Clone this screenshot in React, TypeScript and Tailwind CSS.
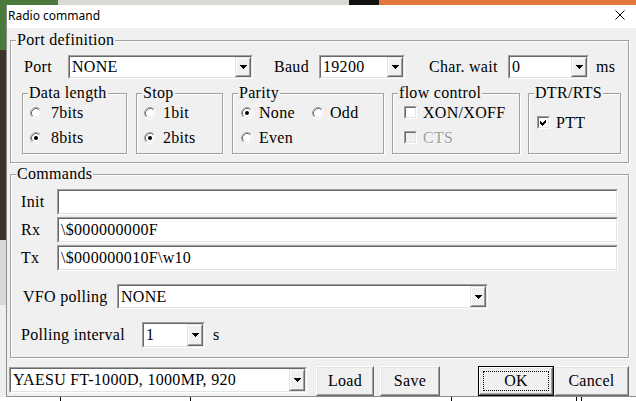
import React from "react";

type Kids = { children?: React.ReactNode };

function Sunken({ cls, bg = "bg-white", children }: { cls: string; bg?: string } & Kids) {
  return (
    <div className={`border border-t-[#a0a0a0] border-l-[#a0a0a0] border-b-white border-r-white ${cls}`}>
      <div className={`h-full w-full border border-t-[#696969] border-l-[#696969] border-b-[#e3e3e3] border-r-[#e3e3e3] ${bg} flex items-center`}>
        {children}
      </div>
    </div>
  );
}

function Arrow() {
  return (
    <svg width="7" height="4" viewBox="0 0 7 4" shapeRendering="crispEdges">
      <rect x="0" y="0" width="7" height="1" fill="#000" />
      <rect x="1" y="1" width="5" height="1" fill="#000" />
      <rect x="2" y="2" width="3" height="1" fill="#000" />
      <rect x="3" y="3" width="1" height="1" fill="#000" />
    </svg>
  );
}

function DropBtn() {
  return (
    <div className="h-full w-[16px] border border-t-[#e3e3e3] border-l-[#e3e3e3] border-b-[#696969] border-r-[#696969]">
      <div className="h-full w-full border border-t-white border-l-white border-b-[#a0a0a0] border-r-[#a0a0a0] bg-[#f0f0f0] flex items-center justify-center">
        <Arrow />
      </div>
    </div>
  );
}

function Combo({ cls, value }: { cls: string; value: string }) {
  return (
    <Sunken cls={cls}>
      <span className="flex-1 pl-[2px] whitespace-nowrap overflow-hidden">{value}</span>
      <DropBtn />
    </Sunken>
  );
}

function Group({ title, cls, children }: { title: string; cls: string } & Kids) {
  return (
    <div className={`relative border border-[#a0a0a0] shadow-[inset_1px_1px_0_#fff,1px_1px_0_#fff] ${cls}`}>
      <span className="absolute left-[5px] top-[-10px] px-[1px] bg-[#f0f0f0] leading-[18px] whitespace-nowrap">{title}</span>
      {children}
    </div>
  );
}

function RadioDot({ checked }: { checked?: boolean }) {
  return (
    <svg width="12" height="12" viewBox="0 0 12 12" className="shrink-0">
      <circle cx="6" cy="6" r="5" fill="#fff" />
      <path d="M2.11 9.89 A5.5 5.5 0 0 1 9.89 2.11" stroke="#a0a0a0" strokeWidth="1" fill="none" />
      <path d="M9.89 2.11 A5.5 5.5 0 0 1 2.11 9.89" stroke="#ffffff" strokeWidth="1" fill="none" />
      <path d="M2.82 9.18 A4.5 4.5 0 0 1 9.18 2.82" stroke="#696969" strokeWidth="1" fill="none" />
      <path d="M9.18 2.82 A4.5 4.5 0 0 1 2.82 9.18" stroke="#e3e3e3" strokeWidth="1" fill="none" />
      {checked && <circle cx="6" cy="6" r="2" fill="#000" />}
    </svg>
  );
}

function Radio({ label, checked, gap }: { label: string; checked?: boolean; gap: string }) {
  return (
    <div className="flex items-center h-[25px]">
      <RadioDot checked={checked} />
      <span className={gap}>{label}</span>
    </div>
  );
}

function Check({ label, checked, disabled }: { label: string; checked?: boolean; disabled?: boolean }) {
  return (
    <div className="flex items-center h-[25px]">
      <div className="w-[13px] h-[13px] shrink-0 border border-t-[#a0a0a0] border-l-[#a0a0a0] border-b-white border-r-white">
        <div className={`w-full h-full border border-t-[#696969] border-l-[#696969] border-b-[#e3e3e3] border-r-[#e3e3e3] ${disabled ? "bg-[#f0f0f0]" : "bg-white"}`}>
          {checked && (
            <svg width="9" height="9" viewBox="0 0 9 9" shapeRendering="crispEdges">
              <path d="M1 3h1v1h1v1h1v-1h1v-1h1v-1h1v3h-1v1h-1v1h-1v1h-1v-1h-1v-1h-1z" fill="#000" />
            </svg>
          )}
        </div>
      </div>
      <span className={`ml-[6px] ${disabled ? "text-[#a0a0a0] [text-shadow:1px_1px_0_#fff]" : ""}`}>{label}</span>
    </div>
  );
}

function Btn({ cls, label, def }: { cls: string; label: string; def?: boolean }) {
  const inner = (
    <div className="w-full h-full border border-t-white border-l-white border-b-[#696969] border-r-[#696969]">
      <div className="w-full h-full border border-t-[#e3e3e3] border-l-[#e3e3e3] border-b-[#a0a0a0] border-r-[#a0a0a0] bg-[#f0f0f0] flex items-center justify-center">
        {def ? (
          <div className="w-[calc(100%-4px)] h-[calc(100%-4px)] border border-dotted border-black flex items-center justify-center">
            {label}
          </div>
        ) : (
          label
        )}
      </div>
    </div>
  );
  return def ? <div className={`border border-black ${cls}`}>{inner}</div> : <div className={cls}>{inner}</div>;
}

function TopStrip() {
  return (
    <div className="flex h-[5px] shrink-0">
      <div className="w-[58px] bg-[#4b7a3c]" />
      <div className="w-[291px] bg-[#d9d9d6]" />
      <div className="w-[30px] bg-[#111111]" />
      <div className="flex-1 bg-[#e0773a]" />
    </div>
  );
}

function LeftStrip() {
  return (
    <div className="w-[6px] shrink-0 flex flex-col">
      <div className="h-[45px] bg-[#4a7a3a]" />
      <div className="h-[190px] bg-[#3a3328]" />
      <div className="h-[65px] bg-[#d8d8d8]" />
      <div className="flex-1 bg-[#efefef]" />
    </div>
  );
}

function BottomStrip() {
  return (
    <div className="flex h-[4px] shrink-0 bg-white">
      <div className="w-[60px]" />
      <div className="w-px bg-black" />
      <div className="w-[129px]" />
      <div className="w-px bg-black" />
      <div className="w-[260px]" />
      <div className="w-px bg-black" />
      <div className="w-[124px]" />
      <div className="w-px bg-black" />
      <div className="w-[4px]" />
      <div className="w-px bg-black" />
    </div>
  );
}

function Dialog() {
  return (
    <div className="flex-1 flex flex-col border-l border-b border-[#8c8c8c] font-['Liberation_Serif',serif] text-[16px] leading-[18px] tracking-[0.3px] text-black">
      <div className="h-[23px] shrink-0 bg-white flex items-center justify-between pl-[1px] pr-[11px] tracking-normal">
        <span className="font-['Noto_Sans',sans-serif] text-[12px] leading-[16px] -mt-[2px]">Radio command</span>
        <svg width="10" height="10" viewBox="0 0 10 10" className="-mt-[3px]">
          <path d="M0.5 0.5 L9.5 9.5 M9.5 0.5 L0.5 9.5" stroke="#000" strokeWidth="1" />
        </svg>
      </div>
      <div className="flex-1 bg-[#f0f0f0] flex flex-col">
        <Group title="Port definition" cls="ml-[3px] mt-[12px] w-[619px] h-[123px] pt-[14px] pl-[13px]">
          <div className="flex items-center h-[24px]">
            <span className="w-[44px]">Port</span>
            <Combo cls="w-[185px] h-[24px]" value="NONE" />
            <span className="ml-[21px] w-[45px]">Baud</span>
            <Combo cls="w-[86px] h-[24px]" value="19200" />
            <span className="ml-[24px] w-[79px]">Char. wait</span>
            <Combo cls="w-[81px] h-[24px]" value="0" />
            <span className="ml-[7px]">ms</span>
          </div>
          <div className="flex mt-[14px] -ml-[2px]">
            <Group title="Data length" cls="w-[105px] h-[61px] pt-[6px] pl-[7px]">
              <Radio label="7bits" gap="ml-[9px]" />
              <Radio label="8bits" checked gap="ml-[9px]" />
            </Group>
            <Group title="Stop" cls="ml-[9px] w-[87px] h-[61px] pt-[6px] pl-[7px]">
              <Radio label="1bit" gap="ml-[7px]" />
              <Radio label="2bits" checked gap="ml-[7px]" />
            </Group>
            <Group title="Parity" cls="ml-[9px] w-[152px] h-[61px] pt-[6px] pl-[8px]">
              <div className="flex">
                <div className="w-[71px]">
                  <Radio label="None" checked gap="ml-[6px]" />
                  <Radio label="Even" gap="ml-[6px]" />
                </div>
                <Radio label="Odd" gap="ml-[6px]" />
              </div>
            </Group>
            <Group title="flow control" cls="ml-[8px] w-[128px] h-[61px] pt-[6px] pl-[11px]">
              <Check label="XON/XOFF" />
              <Check label="CTS" disabled />
            </Group>
            <Group title="DTR/RTS" cls="ml-[8px] w-[93px] h-[61px] pt-[16px] pl-[8px]">
              <Check label="PTT" checked />
            </Group>
          </div>
        </Group>

        <Group title="Commands" cls="ml-[3px] mt-[11px] w-[619px] h-[184px] pt-[14px] pl-[10px]">
          <div className="flex items-center h-[26px]">
            <span className="w-[36px]">Init</span>
            <Sunken cls="w-[561px] h-[26px]" />
          </div>
          <div className="flex items-center h-[26px] mt-[2px]">
            <span className="w-[36px]">Rx</span>
            <Sunken cls="w-[561px] h-[26px]">
              <span className="pl-[2px]">\$000000000F</span>
            </Sunken>
          </div>
          <div className="flex items-center h-[26px] mt-[2px]">
            <span className="w-[36px]">Tx</span>
            <Sunken cls="w-[561px] h-[26px]">
              <span className="pl-[2px]">\$000000010F\w10</span>
            </Sunken>
          </div>
          <div className="flex items-center h-[25px] mt-[13px]">
            <span className="ml-[2px] w-[94px]">VFO polling</span>
            <Combo cls="w-[371px] h-[25px]" value="NONE" />
          </div>
          <div className="flex items-center h-[26px] mt-[13px]">
            <span className="w-[121px]">Polling interval</span>
            <Combo cls="w-[63px] h-[26px]" value="1" />
            <span className="ml-[8px]">s</span>
          </div>
        </Group>

        <div className="flex items-start mt-[8px]">
          <Combo cls="ml-[2px] mt-[1px] w-[298px] h-[26px]" value="YAESU FT-1000D, 1000MP, 920" />
          <Btn cls="ml-[9px] w-[58px] h-[30px]" label="Load" />
          <Btn cls="ml-[6px] w-[60px] h-[30px]" label="Save" />
          <Btn cls="ml-[38px] w-[76px] h-[30px]" label="OK" def />
          <Btn cls="w-[75px] h-[30px]" label="Cancel" />
        </div>
      </div>
    </div>
  );
}

export default function App() {
  return (
    <div className="w-[636px] h-[401px] overflow-hidden flex flex-col bg-white">
      <TopStrip />
      <div className="flex h-[392px] shrink-0">
        <LeftStrip />
        <Dialog />
      </div>
      <BottomStrip />
    </div>
  );
}
